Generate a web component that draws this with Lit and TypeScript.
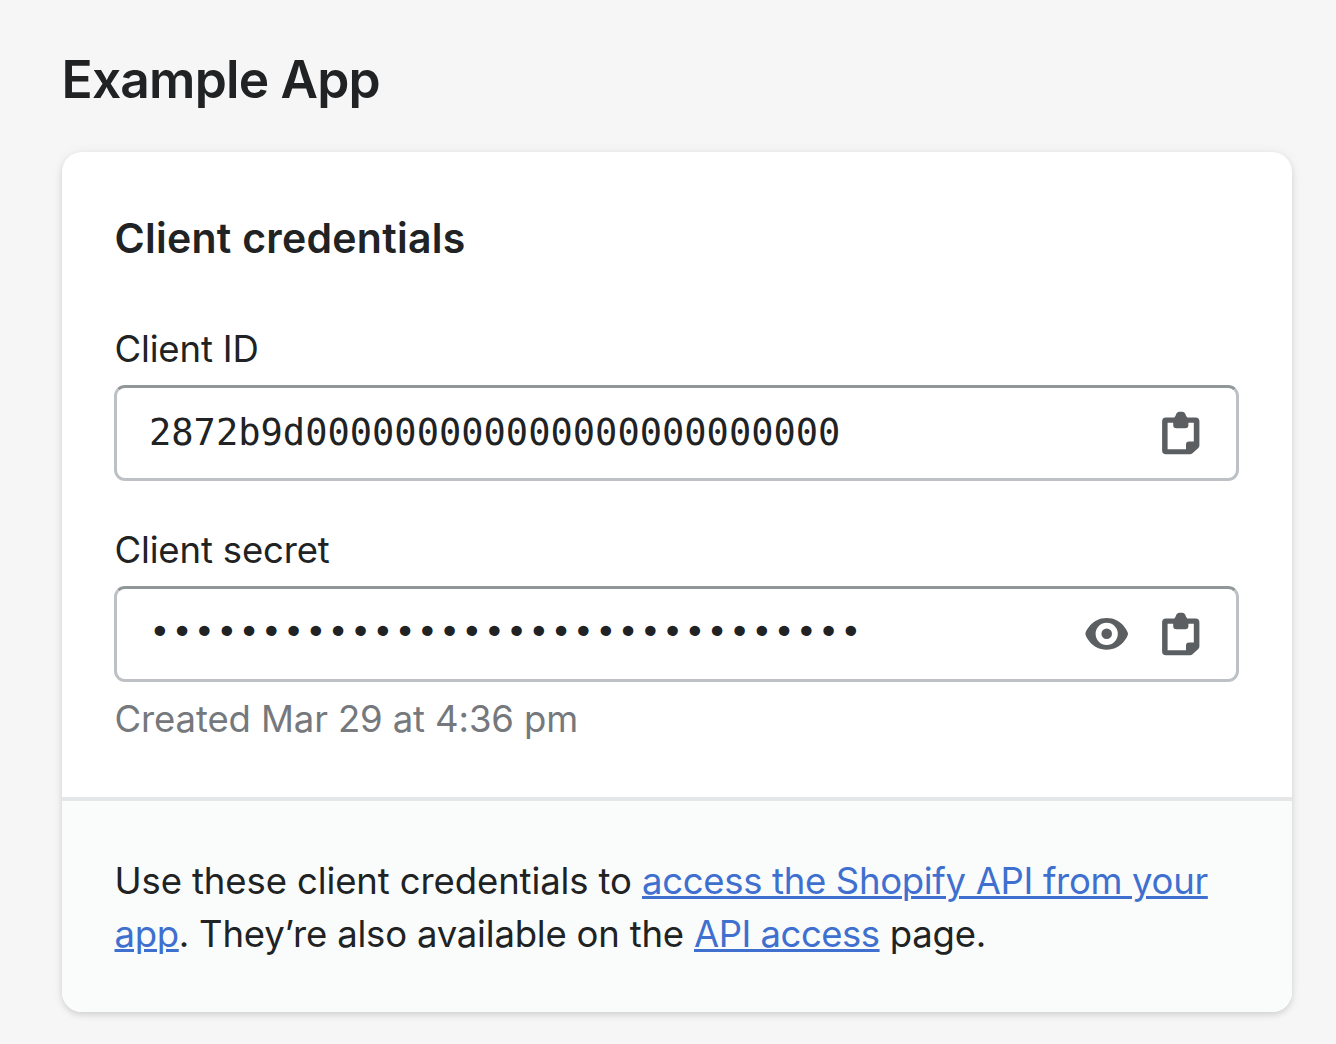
import { LitElement, html, css, svg } from "lit";
import { customElement, property } from "lit/decorators.js";

const clipboardIcon = html`<svg class="clipboard" viewBox="0 0 40 44" aria-hidden="true">
  ${svg`<path fill="#5c5f62" fill-rule="evenodd" d="M14.8 4.2C15.2 2.3 16.7 .8 18.4 .8H21.2C23 .8 24.4 2.3 24.8 4.2L26.2 6.4H34.6Q38.4 6.4 38.4 10.2V34.3Q38.4 35.8 37.3 36.9L31.5 42.2Q30.5 43.2 29 43.2H5Q1.1 43.2 1.1 39.4V10.2Q1.1 6.4 5 6.4H13.4ZM6.6 11.8V38.2H25V33.5Q25 30.4 28 30.4H32.8V11.8H27.4V14Q27.4 17.2 24.2 17.2H15.4Q12.2 17.2 12.2 14V11.8Z"/>`}
</svg>`;

const eyeIcon = html`<svg class="eye" viewBox="0 0 44 34" aria-hidden="true">
  ${svg`<path fill="#5c5f62" fill-rule="evenodd" d="M42.8 15.6C42.6 14.8 37 .9 21.7 .9S.8 14.8 .6 15.6Q.2 16.8 .6 18C.8 18.8 6.4 32.7 21.7 32.7S42.6 18.8 42.8 18Q43.2 16.8 42.8 15.6ZM21.7 27.9A11.1 11.1 0 1 1 21.7 5.7A11.1 11.1 0 0 1 21.7 27.9ZM21.7 11.5A5.3 5.3 0 1 0 21.7 22.1A5.3 5.3 0 0 0 21.7 11.5Z"/>`}
</svg>`;

@customElement("credential-field")
export class CredentialField extends LitElement {
  @property() label = "";
  @property() value = "";
  @property({ type: Boolean }) secret = false;

  static styles = css`
    :host { display: block; }
    .label { padding: 0.5px 0 0 0.5px; font-size: 36.5px; line-height: 53px; letter-spacing: -0.16px; }
    .box {
      box-sizing: border-box;
      display: flex;
      align-items: center;
      height: 96px;
      margin-top: 9.5px;
      padding: 0 35px 0 32px;
      border: 3px solid #bdc1c5;
      border-top-color: #919699;
      border-radius: 11px;
      background: #fff;
    }
    .value {
      flex: 1;
      font-family: "DejaVu Sans Mono", monospace;
      font-size: 37.05px;
      line-height: 53px;
      padding-bottom: 1px;
      white-space: nowrap;
    }
    .dots { font-size: 36px; letter-spacing: 0.62px; padding-bottom: 5px; }
    .icons { display: flex; align-items: center; gap: 32px; }
    svg { display: block; }
    .clipboard { width: 40px; height: 44px; }
    .eye { width: 44px; height: 34px; }
  `;

  render() {
    return html`
      <div class="label">${this.label}</div>
      <div class="box">
        <div class="value ${this.secret ? "dots" : ""}">${this.secret ? "•".repeat(32) : this.value}</div>
        <div class="icons">${this.secret ? eyeIcon : ""}${clipboardIcon}</div>
      </div>
    `;
  }
}

@customElement("app-root")
export class AppRoot extends LitElement {
  static styles = css`
    :host {
      display: block;
      box-sizing: border-box;
      height: 1044px;
      padding: 42px 44px 0 61.5px;
      background: #f6f6f6;
      color: #202223;
      font-family: Inter, "Liberation Sans", sans-serif;
      overflow: hidden;
    }
    h1 { margin: 0; font-size: 51.5px; line-height: 74px; font-weight: 600; letter-spacing: -0.8px; }
    .card {
      margin-top: 36px;
      height: 860px;
      display: flex;
      flex-direction: column;
      border-radius: 20px;
      background: #fff;
      overflow: hidden;
      box-shadow: 0 0 13px rgba(23, 24, 24, 0.05), 0 3px 6px rgba(0, 0, 0, 0.12);
    }
    .main { box-sizing: border-box; height: 645px; padding: 60px 53px 0 52.5px; }
    h2 { margin: 0 0 57px; padding-left: 0.5px; font-size: 41px; line-height: 53px; font-weight: 600; letter-spacing: 0.27px; }
    .second { margin-top: 42px; }
    .help { padding-left: 0.5px; font-size: 36.5px; line-height: 53px; margin-top: 11px; color: #75787c; letter-spacing: -0.12px; }
    .footer {
      flex: 1;
      padding: 54px 53px 0;
      border-top: 4px solid #e5e6e8;
      background: #fafcfb;
      font-size: 36.5px;
      line-height: 53px;
      letter-spacing: -0.11px;
    }
    p { margin: 0; white-space: nowrap; }
    a {
      color: #3f70cf;
      letter-spacing: -0.32px;
      text-decoration: underline;
      text-decoration-thickness: 3px;
      text-underline-offset: 2px;
    }
    .tail { letter-spacing: -0.2px; }
    .tail a { letter-spacing: -0.5px; }
  `;

  render() {
    return html`
      <h1>Example App</h1>
      <section class="card">
        <div class="main">
          <h2>Client credentials</h2>
          <credential-field label="Client ID" value="2872b9d000000000000000000000000"></credential-field>
          <credential-field class="second" label="Client secret" secret></credential-field>
          <div class="help">Created Mar 29 at 4:36 pm</div>
        </div>
        <div class="footer">
          <p>Use these client credentials to <a>access the Shopify API from your<br>app</a><span class="tail">. They’re also available on the <a>API access</a> page.</span></p>
        </div>
      </section>
    `;
  }
}
